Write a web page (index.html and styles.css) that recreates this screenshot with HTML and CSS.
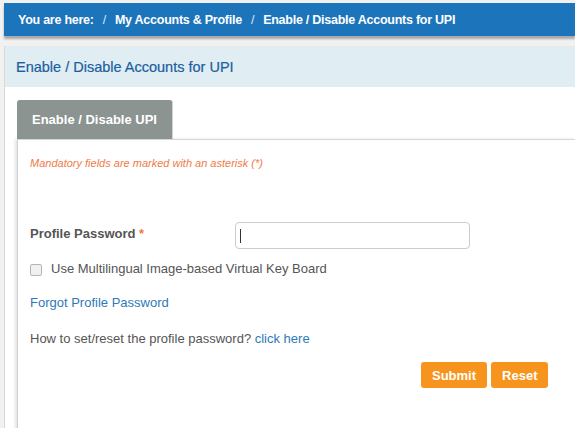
FILE: index.html
```html
<!DOCTYPE html>
<html>
<head>
<meta charset="utf-8">
<link rel="stylesheet" href="styles.css">
</head>
<body>
<div class="page">
  <div class="crumbs">
    <span>You are here:</span><span class="sep">/</span><span>My Accounts &amp; Profile</span><span class="sep">/</span><span>Enable / Disable Accounts for UPI</span>
  </div>
  <div class="panel">
    <div class="panel-head">Enable / Disable Accounts for UPI</div>
    <div class="panel-body">
      <div class="tabs"><div class="tab">Enable / Disable UPI</div></div>
      <div class="content">
        <p class="mandatory">Mandatory fields are marked with an asterisk (*)</p>
        <div class="row">
          <label class="label">Profile Password <span class="star">*</span></label>
          <div class="input"><span class="caret"></span></div>
        </div>
        <div class="check"><span class="box"></span><span>Use Multilingual Image-based Virtual Key Board</span></div>
        <a class="link forgot">Forgot Profile Password</a>
        <p class="howto">How to set/reset the profile password? <a class="link">click here</a></p>
        <div class="actions">
          <button class="btn">Submit</button>
          <button class="btn">Reset</button>
        </div>
      </div>
    </div>
  </div>
</div>
</body>
</html>
```
FILE: styles.css
```css
html, body { margin: 0; padding: 0; }
body {
  background: #f1f1f1;
  font-family: "Liberation Sans", Arial, sans-serif;
  width: 575px;
  height: 428px;
  overflow: hidden;
}
.page { padding: 3px 0 0 4px; }
.crumbs {
  background: #1c74bb;
  height: 33px;
  display: flex;
  align-items: center;
  padding-left: 14px;
  color: #fff;
  font-weight: bold;
  font-size: 12.5px;
  letter-spacing: -0.25px;
  box-shadow: 0 3px 2px #a9a9a9;
}
.crumbs .sep { margin: 0 9px 0 9px; font-weight: normal; color: #dfe9f3; }
.panel {
  margin-top: 10px;
  background: #fff;
  border-left: 1px solid #d8d8d8;
  height: 400px;
}
.panel-head {
  background: #e0edf3;
  height: 40px;
  display: flex;
  align-items: center;
  padding-left: 11px;
  color: #1b5f9e;
  font-size: 14.5px;
  -webkit-text-stroke: 0.2px #1b5f9e;
  border-top: 1px solid #e9e9e9;
}
.panel-body { padding: 13px 0 0 12px; }
.tabs { display: flex; }
.tab {
  width: 156px;
  height: 39px;
  background: #8b9491;
  border-radius: 3px 3px 0 0;
  color: #fff;
  font-weight: bold;
  font-size: 13px;
  display: flex;
  align-items: center;
  justify-content: center;
  box-sizing: border-box;
  border-right: 1px solid #cfd3d2;
}
.content {
  border-top: 1px solid #d6d6d6;
  border-left: 1px solid #d0d0d0;
  box-shadow: -2px 0 3px #e4e4e4;
  padding: 0 0 0 12px;
  height: 300px;
}
.mandatory {
  margin: 17px 0 0;
  color: #f07a47;
  font-style: italic;
  font-size: 11px;
  line-height: 13px;
}
.row { display: flex; align-items: flex-start; margin-top: 52px; }
.label { width: 205px; font-weight: bold; color: #555; font-size: 13px; line-height: 15px; padding-top: 4px; }
.star { color: #f07a47; }
.input {
  width: 233px;
  height: 25px;
  border: 1px solid #cccccc;
  border-radius: 4px;
  position: relative;
}
.caret {
  position: absolute;
  left: 4px;
  top: 6px;
  width: 1px;
  height: 14px;
  background: #333;
}
.check { display: flex; align-items: center; margin-top: 12px; color: #555; font-size: 13px; line-height: 15px; }
.box {
  width: 10px;
  height: 10px;
  border: 1px solid #b5b5b5;
  border-radius: 2px;
  background: #f0f0f0;
  margin: 3px 9px 0 0;
}
.link { color: #2f79b9; text-decoration: none; }
.forgot { display: block; margin-top: 19px; font-size: 13px; line-height: 15px; }
.howto { margin: 21px 0 0; color: #555; font-size: 13px; line-height: 15px; }
.actions { display: flex; gap: 4px; padding-left: 391px; margin-top: 16px; }
.btn {
  font-family: "Liberation Sans", Arial, sans-serif;
  background: #f7941d;
  color: #fff;
  font-weight: bold;
  font-size: 13px;
  border: none;
  border-radius: 3px;
  height: 26px;
  padding: 0 11px;
}
```
